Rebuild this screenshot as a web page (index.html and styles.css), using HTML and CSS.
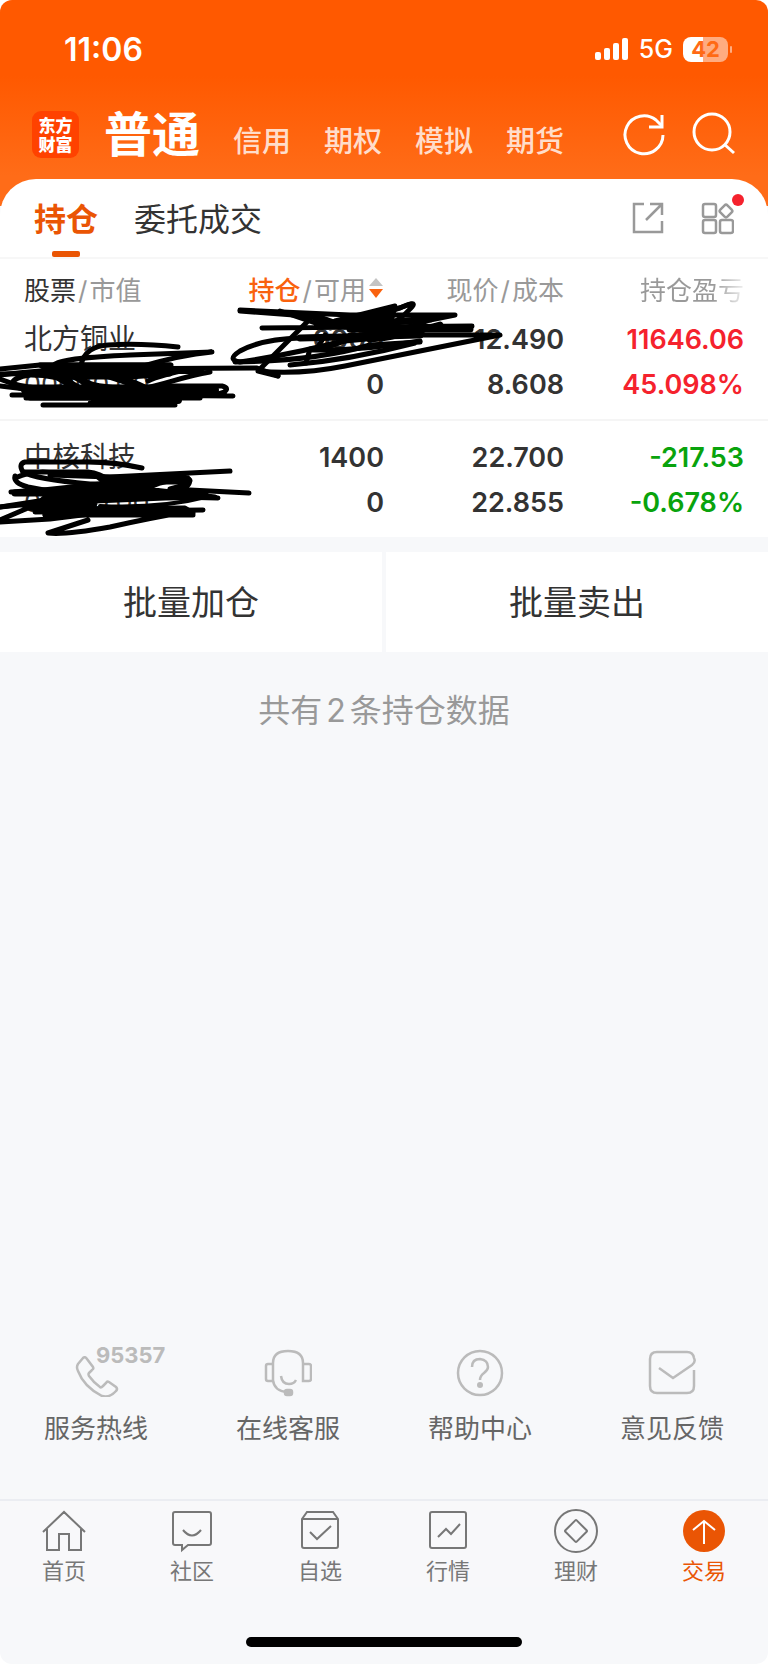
FILE: index.html
```
<!DOCTYPE html>
<html lang="zh-CN">
<head>
    <meta charset="UTF-8">
    <meta name="viewport" content="width=device-width, initial-scale=1.0">
    <title>持仓</title>
    <link rel="stylesheet" href="styles.css">
</head>
<body>
    <div class="screen">
    <header class="header">
        <div class="statusbar">
            <span class="time">11:06</span>
            <div class="status-right">
                <svg width="34" height="24" viewBox="0 0 34 24" fill="#fff">
                    <rect x="0" y="15" width="6" height="8" rx="2"/>
                    <rect x="9" y="11" width="6" height="12" rx="2"/>
                    <rect x="18" y="6" width="6" height="17" rx="2"/>
                    <rect x="27" y="1" width="6" height="22" rx="2"/>
                </svg>
                <span class="network">5G</span>
                <span class="battery">42</span>
            </div>
        </div>
        <div class="topnav">
            <a href="#" class="logo">东方<br>财富</a>
            <nav class="accounts">
                <a href="#" class="current">普通</a>
                <a href="#">信用</a>
                <a href="#">期权</a>
                <a href="#">模拟</a>
                <a href="#">期货</a>
            </nav>
            <div class="actions">
                <button type="button" aria-label="刷新">
                    <svg width="44" height="44" viewBox="0 0 44 44" fill="none" stroke="#fff" stroke-width="3">
                        <path d="M41 23A19 19 0 1 1 34 8L40 14"/>
                        <path d="M40 3V15H27"/>
                    </svg>
                </button>
                <button type="button" aria-label="搜索">
                    <svg width="44" height="44" viewBox="0 0 44 44" fill="none" stroke="#fff" stroke-width="3">
                        <circle cx="20" cy="20" r="18"/>
                        <path d="M32 32L42 41"/>
                    </svg>
                </button>
            </div>
        </div>
    </header>

    <main class="panel">
        <div class="tabs">
            <a href="#" class="tab active">持仓</a>
            <a href="#" class="tab">委托成交</a>
            <div class="tools">
                <button type="button" aria-label="分享">
                    <svg width="32" height="32" viewBox="0 0 32 32" fill="none" stroke="#999" stroke-width="2.5">
                        <path d="M12 2H2V30H30V19M18 2H30V13M29 3L14 18"/>
                    </svg>
                </button>
                <button type="button" aria-label="更多功能" class="more">
                    <svg width="34" height="34" viewBox="0 0 34 34" fill="none" stroke="#999" stroke-width="2.5">
                        <rect x="3" y="3" width="13" height="13" rx="2"/>
                        <rect x="3" y="19" width="13" height="13" rx="2"/>
                        <rect x="20" y="19" width="13" height="13" rx="2"/>
                        <rect x="21" y="5" width="10" height="10" rx="2" transform="rotate(45 26 10)"/>
                    </svg>
                    <i class="dot"></i>
                </button>
            </div>
        </div>

        <div class="holdings">
            <table>
                <thead>
                    <tr>
                        <th><b>股票</b><i>/</i>市值</th>
                        <th><span class="sorted"><span><em>持仓</em><i>/</i>可用</span>
                            <svg width="16" height="22" viewBox="0 0 16 22">
                                <path d="M8 1L15 9H1Z" fill="#c4c4c4"/>
                                <path d="M8 21L15 12H1Z" fill="#f9620e"/>
                            </svg></span>
                        </th>
                        <th>现价<i>/</i>成本</th>
                        <th><span class="fade">持仓盈亏</span></th>
                    </tr>
                </thead>
                <tbody>
                    <tr>
                        <td><span class="name">北方铜业</span><span class="value">00000.00</span></td>
                        <td><span>0000</span><span>0</span></td>
                        <td><span>12.490</span><span>8.608</span></td>
                        <td class="up"><span>11646.06</span><span>45.098%</span></td>
                    </tr>
                    <tr>
                        <td><span class="name">中核科技</span><span class="value">00000.00</span></td>
                        <td><span>1400</span><span>0</span></td>
                        <td><span>22.700</span><span>22.855</span></td>
                        <td class="down"><span>-217.53</span><span>-0.678%</span></td>
                    </tr>
                </tbody>
            </table>

            <!-- 手写涂抹 -->
            <svg class="scribble" viewBox="0 258 768 280" fill="none" stroke="#000" stroke-width="5" stroke-linecap="round" stroke-linejoin="round">
                <path d="M81 364C84 350 94 345 108 344Q140 342 178 346"/>
                <path d="M55 363C62 358 90 356 130 354L212 351C190 353 160 360 140 366"/>
                <path d="M0 368L40 364L171 364M0 374Q40 369 80 368L257 367L278 375"/>
                <path d="M0 385Q60 393 120 394L233 395M12 394H225M26 397H200"/>
                <path d="M210 371C180 376 165 384 140 388H30C5 388 8 377 30 374L75 374Q90 388 130 386"/>
                <path d="M0 373C30 372 50 374 70 380M0 378Q28 390 60 386M130 368H190Q160 374 148 380"/>
                <path d="M160 385H222Q230 387 224 391Q210 396 170 396M43 404H175L90 402L180 397"/>
                <path d="M25 389H215M40 392H180M95 399H178M50 369H200" stroke-width="8"/>
                <path d="M40 364H170V373L130 376H60ZM30 386H180V397H30ZM95 399L180 393L170 402H110Z" fill="#000"/>
                <path d="M52 372L82 390M60 372Q85 374 90 390M100 372Q125 378 150 390" stroke-width="8"/>

                <path d="M240 309L350 314H455L430 319Q400 330 350 338Q300 352 240 361Q226 359 240 350Q262 338 300 337"/>
                <path d="M262 327L472 325M280 310L330 327L400 307Q420 298 410 308Q400 320 380 328L325 347L310 348L306 362"/>
                <path d="M312 316L258 370L278 375M258 370Q300 374 345 365L500 334L350 334"/>
                <path d="M235 361Q315 360 370 344L420 341M290 364Q350 359 415 342M240 310L320 316L345 325L411 303"/>
                <path d="M335 320L395 305L390 325L345 340L420 333Z" fill="#000"/>
                <path d="M350 328H470M300 337L420 334M370 338Q400 336 440 324M316 319L345 325L430 318" stroke-width="7"/>
                <path d="M312 349Q360 350 420 340M325 334L318 346" stroke-width="5"/>

                <path d="M142 467Q110 460 80 461H25Q18 463 23 471Q35 478 90 483H143"/>
                <path d="M23 471H88Q100 472 110 480M15 475Q13 482 28 486L60 492M15 477Q35 468 55 472"/>
                <path d="M50 474L110 476L230 470M11 491Q50 489 90 484L185 475Q194 480 185 487"/>
                <path d="M143 477H185Q200 480 170 488L249 492M20 492L218 497M0 506Q40 499 80 495L145 485"/>
                <path d="M0 506L60 500M0 519L28 507L60 509M0 521L50 518L90 513M35 511L203 509"/>
                <path d="M88 519L48 532Q65 534 110 526Q150 517 180 512M45 514H193"/>
                <path d="M110 480H186M15 492H205M130 487H145" stroke-width="7"/>
                <path d="M98 476L180 477L160 482L145 488L215 496L165 497L95 500L35 505L50 492L110 486ZM35 508L185 507L193 512L45 514L65 500L95 503Z" fill="#000"/>
                <path d="M100 505Q160 508 210 495" stroke-width="4"/>
            </svg>
        </div>
    </main>

    <div class="batch">
        <button type="button">批量加仓</button>
        <button type="button">批量卖出</button>
    </div>
    <p class="count">共有<span>2</span>条持仓数据</p>

    <div class="services">
        <a href="#">
            <span class="service-icon">
                <svg width="48" height="48" viewBox="0 0 48 48" fill="none" stroke="#bbb" stroke-width="2.5">
                    <path d="M11 9Q13 7 15 10L21 18Q22 20 20 21L17 24Q16 25 17 27Q22 34 28 38Q29 39 31 37L34 34Q35 32 37 33L44 38Q46 40 44 42Q38 49 30 47Q12 38 6 22Q4 18 6 15Z"/>
                </svg>
                <b class="hotline">95357</b>
            </span>
            服务热线
        </a>
        <a href="#">
            <span class="service-icon">
                <svg width="48" height="48" viewBox="0 0 48 48" fill="none" stroke="#bbb" stroke-width="2.5">
                    <path d="M9 15V14Q9 2 24 2T39 14V32H45Q47 32 47 30V17Q47 15 45 15H39M9 15H4Q2 15 2 17V30Q2 32 4 32H9V15M9 31Q10 42 23 43M17 27Q18 35 25 35Q30 35 32 31"/>
                    <rect x="21" y="41" width="7" height="5" rx="2" fill="#bbb"/>
                </svg>
            </span>
            在线客服
        </a>
        <a href="#">
            <span class="service-icon">
                <svg width="48" height="48" viewBox="0 0 48 48" fill="none" stroke="#bbb" stroke-width="2.5">
                    <circle cx="24" cy="24" r="22"/>
                    <path d="M16 18Q16 10 24 10Q32 11 32 18Q32 21 28 24Q24 27 24 31"/>
                    <circle cx="24" cy="36" r="3" fill="#bbb" stroke="none"/>
                </svg>
            </span>
            帮助中心
        </a>
        <a href="#">
            <span class="service-icon">
                <svg width="48" height="48" viewBox="0 0 48 48" fill="none" stroke="#bbb" stroke-width="2.5">
                    <path d="M11 19L25 29L44 16Q48 13 46 9Q45 3 39 3H9Q2 3 2 10V37Q2 44 9 44H39Q46 44 46 37V21"/>
                </svg>
            </span>
            意见反馈
        </a>
    </div>

    <nav class="tabbar">
        <a href="#">
            <svg width="44" height="44" viewBox="0 0 44 44" fill="none" stroke="#777" stroke-width="2">
                <path d="M1 23L22 3L43 23M5 20V41H17V25H27V41H39V20"/>
            </svg>
            首页
        </a>
        <a href="#">
            <svg width="44" height="44" viewBox="0 0 44 44" fill="none" stroke="#777" stroke-width="2">
                <path d="M5 3H39Q41 3 41 5V34Q41 36 39 36H18L12 41V36H5Q3 36 3 34V5Q3 3 5 3ZM13 21Q22 32 31 21"/>
            </svg>
            社区
        </a>
        <a href="#">
            <svg width="44" height="44" viewBox="0 0 44 44" fill="none" stroke="#777" stroke-width="2">
                <path d="M4 10L9 3H35L40 10V37Q40 39 38 39H6Q4 39 4 37ZM4 10H40M12 23L19 30L33 17"/>
            </svg>
            自选
        </a>
        <a href="#">
            <svg width="44" height="44" viewBox="0 0 44 44" fill="none" stroke="#777" stroke-width="2">
                <rect x="4" y="3" width="36" height="36" rx="2"/>
                <path d="M12 28L20 20L25 25L34 15"/>
            </svg>
            行情
        </a>
        <a href="#">
            <svg width="44" height="44" viewBox="0 0 44 44" fill="none" stroke="#777" stroke-width="2">
                <circle cx="22" cy="22" r="21"/>
                <rect x="14" y="14" width="16" height="16" rx="1" transform="rotate(45 22 22)"/>
            </svg>
            理财
        </a>
        <a href="#" class="on">
            <svg width="44" height="44" viewBox="0 0 44 44" fill="none" stroke="#fff" stroke-width="2">
                <circle cx="22" cy="22" r="21" fill="#ea5504" stroke="none"/>
                <path d="M22 35V12M11 21L22 12L33 21"/>
            </svg>
            交易
        </a>
    </nav>
    <div class="home-bar"></div>
    </div>
</body>
</html>
```
FILE: styles.css
```
* {
    box-sizing: border-box;
}

body {
    margin: 0;
    background-color: #fff;
    font-family: Inter, "Noto Sans CJK SC", sans-serif;
    color: #333;
}

a {
    color: inherit;
    text-decoration: none;
}

button {
    padding: 0;
    border: none;
    background: none;
    font-family: inherit;
    color: inherit;
    cursor: pointer;
}

svg {
    display: block;
}

.screen {
    display: flex;
    flex-direction: column;
    min-height: 100vh;
    background-color: #f7f8fa;
    border-radius: 12px;
    overflow: hidden;
}

/* 顶部 */
.header {
    padding-bottom: 36px;
    background: linear-gradient(#ff5900 76px, #ff6c18 176px);
    color: #fff;
}

.statusbar {
    display: flex;
    justify-content: space-between;
    align-items: center;
    height: 98px;
    padding: 0 40px 0 64px;
}

.time {
    font-size: 32px;
    font-weight: 600;
}

.status-right {
    display: flex;
    align-items: center;
}

.network {
    margin: 0 10px;
    font-size: 25px;
    font-weight: 500;
}

.battery {
    position: relative;
    width: 45px;
    height: 25px;
    border-radius: 8px;
    background: linear-gradient(90deg, #fff 20px, rgba(255, 255, 255, 0.5) 20px);
    color: #ff6a14;
    font-size: 22px;
    font-weight: 700;
    line-height: 25px;
    text-align: center;
}

.battery::after {
    content: "";
    position: absolute;
    top: 9px;
    right: -4px;
    width: 2px;
    height: 7px;
    border-radius: 1px;
    background-color: rgba(255, 255, 255, 0.5);
}

.topnav {
    display: flex;
    align-items: center;
    height: 72px;
    padding: 0 32px;
}

.logo {
    width: 47px;
    height: 47px;
    margin-right: 25px;
    padding-top: 4px;
    border-radius: 9px;
    background-color: #ff4200;
    font-family: "Noto Sans CJK SC", sans-serif;
    font-size: 17px;
    font-weight: 900;
    line-height: 19px;
    text-align: center;
}

.accounts {
    display: flex;
    align-items: baseline;
    gap: 33px;
    padding-top: 8px;
    font-size: 29px;
    font-weight: 500;
    line-height: 64px;
    color: rgba(255, 255, 255, 0.8);
}

.accounts .current {
    font-size: 48px;
    font-weight: 700;
    color: #fff;
}

.actions {
    display: flex;
    gap: 26px;
    margin-left: auto;
}

/* 持仓 */
.panel {
    margin-top: -27px;
    border-radius: 36px 36px 0 0;
    background-color: #fff;
}

.tabs {
    display: flex;
    align-items: center;
    gap: 36px;
    height: 80px;
    padding: 0 34px;
    border-bottom: 2px solid #f7f7f7;
}

.tab {
    position: relative;
    padding-top: 4px;
    font-size: 32px;
    line-height: 74px;
}

.tab.active {
    color: #ea5504;
    font-weight: 700;
}

.tab.active::after {
    content: "";
    position: absolute;
    left: 50%;
    bottom: 0;
    width: 28px;
    height: 6px;
    margin-left: -14px;
    border-radius: 2px;
    background-color: #ea5504;
}

.tools {
    display: flex;
    align-items: center;
    gap: 36px;
    margin-left: auto;
}

.more {
    position: relative;
}

.dot {
    position: absolute;
    top: -7px;
    right: -10px;
    width: 12px;
    height: 12px;
    border-radius: 50%;
    background-color: #f5222d;
}

.holdings {
    position: relative;
}

table {
    width: 100%;
    border-collapse: collapse;
    table-layout: fixed;
}

th, td {
    padding: 0;
    text-align: right;
}

th {
    height: 58px;
    font-size: 26px;
    font-weight: 400;
    color: #999;
    white-space: nowrap;
}

th b {
    font-weight: 400;
    color: #333;
}

th em {
    font-style: normal;
    font-weight: 500;
    color: #f9620e;
}

th i {
    margin: 0 2px;
    font-style: normal;
}

th:first-child,
td:first-child {
    width: 26%;
    padding-left: 24px;
    text-align: left;
}

th:nth-child(2) {
    width: 24%;
}

th:last-child {
    width: 204px;
}

th:last-child,
td:last-child {
    padding-right: 24px;
}

.sorted {
    display: flex;
    justify-content: flex-end;
    align-items: center;
    gap: 2px;
}

.fade {
    background: linear-gradient(90deg, #999 70%, #eee 100%);
    -webkit-background-clip: text;
    background-clip: text;
    color: transparent;
}

td {
    padding-bottom: 12px;
    font-size: 27px;
    font-weight: 600;
    line-height: 45px;
}

td span {
    display: block;
}

td .name {
    font-size: 28px;
    font-weight: 400;
}

td .value {
    font-weight: 400;
}

tbody tr + tr td {
    padding-top: 14px;
    border-top: 2px solid #f5f5f5;
}

.up {
    color: #f5222d;
}

.down {
    color: #09a30d;
}

.scribble {
    position: absolute;
    top: 0;
    left: 0;
    width: 100%;
    pointer-events: none;
}

/* 批量操作 */
.batch {
    display: grid;
    grid-template-columns: 1fr 1fr;
    gap: 4px;
    margin-top: 15px;
}

.batch button {
    height: 100px;
    padding-bottom: 4px;
    background-color: #fff;
    font-size: 34px;
}

.count {
    margin: 35px 0;
    color: #999;
    font-size: 32px;
    line-height: 48px;
    text-align: center;
}

.count span {
    margin: 0 4px;
}

/* 服务 */
.services {
    display: grid;
    grid-template-columns: repeat(4, 1fr);
    margin-top: auto;
    padding-bottom: 50px;
}

.services a {
    display: flex;
    flex-direction: column;
    align-items: center;
    gap: 12px;
    color: #666;
    font-size: 26px;
    line-height: 40px;
}

.service-icon {
    position: relative;
}

.hotline {
    position: absolute;
    top: -6px;
    left: 24px;
    color: #bbb;
    font-size: 22px;
    line-height: 24px;
}

/* 底部导航 */
.tabbar {
    display: grid;
    grid-template-columns: repeat(6, 1fr);
    padding-top: 8px;
    border-top: 2px solid #ebedf2;
    background-color: #f8f8fa;
}

.tabbar a {
    display: flex;
    flex-direction: column;
    align-items: center;
    gap: 2px;
    color: #777;
    font-size: 22px;
    line-height: 32px;
}

.tabbar .on {
    color: #ea5504;
}

.home-bar {
    width: 36%;
    height: 10px;
    margin: 50px auto 17px;
    border-radius: 5px;
    background-color: #000;
}
```
